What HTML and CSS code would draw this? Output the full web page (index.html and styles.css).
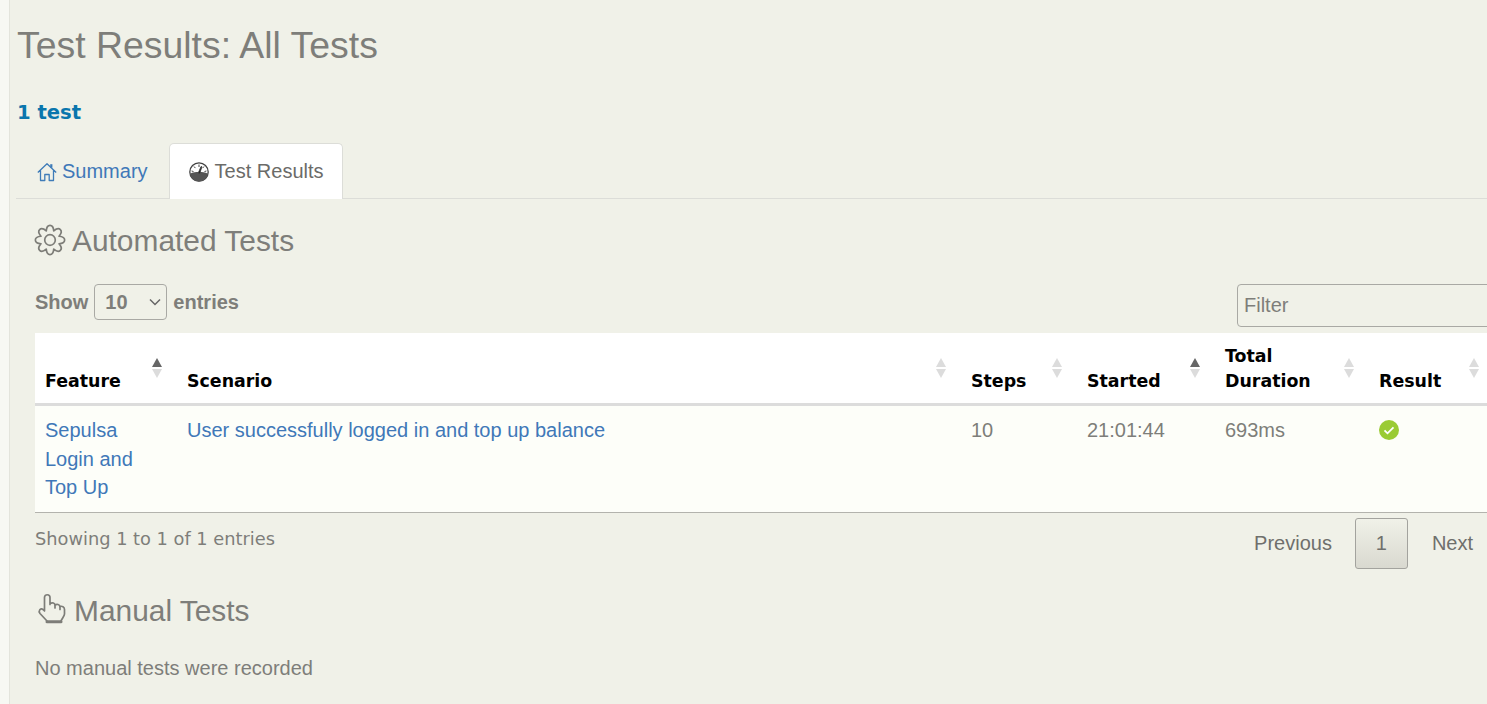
FILE: index.html
```html
<!DOCTYPE html>
<html lang="en">
<head>
<meta charset="utf-8">
<title>Test Results: All Tests</title>
<link rel="stylesheet" href="styles.css">
</head>
<body>
<main class="content">
  <h1 class="title">Test Results: All Tests</h1>
  <p class="count">1 test</p>
  <nav class="tabs">
    <a class="tab" href="#">
      <svg class="tab-icon" viewBox="0 0 20 20" fill="none" stroke="#3f7cb8" stroke-width="1.300"><path d="M.8 10.500 10 1.800l9.200 8.700M3.500 8.500V18.500h4.300v-6h4.400v6h4.300V8.500" stroke-linejoin="round"/><path d="M14.300 2.200v3.500" stroke-width="2.200"/></svg>
      Summary
    </a>
    <a class="tab tab-active" href="#">
      <svg class="tab-icon" viewBox="0 0 20 20"><circle cx="10" cy="10" r="9.200" fill="#fff" stroke="#444" stroke-width="1.300"/><path d="M1 12c2-1.700 4-1.500 6.500-2h5c2.500.5 4.500.3 6.500 2-.9 4.300-4.500 7.500-9 7.500S1.900 16.300 1 12z" fill="#555"/><path d="m9.300 11 2.800-6.500.8.300L10.700 11.300zM10 2.500v2.500M5 4.500l1.400 1.600M15 4.500l-1.400 1.600M2.600 9l1.900.5M17.400 9l-1.900.5" stroke="#444" stroke-width="1"/></svg>
      Test Results
    </a>
  </nav>
  <section class="panel">
    <h2 class="section-title">
      <svg class="section-icon" viewBox="0 0 30 30" fill="none" stroke="#7d7d78" stroke-width="1.700" stroke-linejoin="round"><path d="M11.250 5.950C11.800-1.500 18.200-1.500 18.750 5.950 24.410 1.070 28.930 5.590 24.050 11.250 31.500 11.800 31.500 18.200 24.050 18.750 28.930 24.410 24.410 28.930 18.750 24.050 18.200 31.500 11.800 31.500 11.250 24.050 5.590 28.930 1.070 24.410 5.950 18.750-1.500 18.200-1.500 11.800 5.950 11.250 1.070 5.590 5.590 1.070 11.250 5.950Z"/><circle cx="15" cy="15" r="5.300"/></svg>
      Automated Tests
    </h2>
    <div class="table-controls">
      <label class="length">Show
        <select class="length-select"><option>10</option></select>
        entries
      </label>
      <input class="filter" type="text" placeholder="Filter">
    </div>
    <table class="results">
      <colgroup>
        <col class="col-feature"><col class="col-scenario"><col class="col-steps"><col class="col-started"><col class="col-duration"><col class="col-result">
      </colgroup>
      <thead>
        <tr>
          <th class="sort sort-asc">Feature</th>
          <th class="sort">Scenario</th>
          <th class="sort">Steps</th>
          <th class="sort sort-asc">Started</th>
          <th class="sort">Total Duration</th>
          <th class="sort">Result</th>
        </tr>
      </thead>
      <tbody>
        <tr>
          <td><a href="#">Sepulsa Login and Top Up</a></td>
          <td><a href="#">User successfully logged in and top up balance</a></td>
          <td>10</td>
          <td>21:01:44</td>
          <td>693ms</td>
          <td><svg class="result-icon" viewBox="0 0 20 20"><circle cx="10" cy="10" r="10" fill="#9acb34"/><path d="m5.500 10.300 3 3 6-6" fill="none" stroke="#fff" stroke-width="1.800"/></svg></td>
        </tr>
      </tbody>
    </table>
    <div class="table-footer">
      <span class="info">Showing 1 to 1 of 1 entries</span>
      <div class="pager">
        <a class="page page-first" href="#">Previous</a>
        <a class="page page-current" href="#">1</a>
        <a class="page" href="#">Next</a>
      </div>
    </div>
    <h2 class="section-title section-manual">
      <svg class="section-icon hand-icon" viewBox="0 0 30 30" fill="none" stroke="#7d7d78" stroke-width="1.700" stroke-linejoin="round" stroke-linecap="round"><path d="M12 27 5 19.500C3 17 5.500 13.500 8 15.500L9.500 17V3.500C9.500-.2 15-.2 15 3.500V10.500M15 9.500c2.500-1.200 4.800-.5 5 1.500 2-1.200 4.500-.5 5 1.500 2-.8 4.500.5 4.500 3V20c0 2-2.500 4.500-3.500 7"/><path d="M20 11v3M25 12.500v3"/><path d="M12 27.800h14" stroke-width="3"/></svg>
      Manual Tests
    </h2>
    <p class="empty">No manual tests were recorded</p>
  </section>
</main>
</body>
</html>
```
FILE: styles.css
```css
html, body {
  margin: 0;
  height: 100%;
  overflow: hidden;
}
body {
  background: #f7f8f3;
  padding-left: 9px;
  font-family: "Liberation Sans", Arial, sans-serif;
  font-size: 20px;
  color: #7e7e7a;
  box-sizing: border-box;
}
a {
  color: #4078b8;
  text-decoration: none;
}
.content {
  box-sizing: border-box;
  width: 1520px;
  height: 704px;
  background: #f0f1e8;
  border-left: 1px solid #e3e4dc;
  padding: 0 0 0 6px;
}
.title {
  margin: 0;
  padding: 24px 0 0 1px;
  font-size: 37.400px;
  line-height: 43px;
  font-weight: 400;
}
.count {
  margin: 0;
  padding: 34px 0 0 1px;
  font-family: "DejaVu Sans", Verdana, sans-serif;
  font-weight: 700;
  font-size: 19.600px;
  line-height: 24px;
  color: #0a76ad;
}
.tabs {
  display: flex;
  margin-top: 18px;
  height: 55px;
  border-bottom: 1px solid #dcddd8;
}
.tab {
  display: flex;
  align-items: center;
  gap: 5px;
  box-sizing: border-box;
  height: 56px;
  padding: 0 20px;
  font-size: 20px;
  border: 1px solid transparent;
  border-bottom: 0;
  border-radius: 5px 5px 0 0;
}
.tab-active {
  gap: 6px;
  padding: 0 18px 0 19px;
  background: #fff;
  border-color: #dcddd8;
  color: #6b6b68;
}
.tab-icon {
  width: 20px;
  height: 20px;
  flex: none;
}
.panel {
  padding: 0 0 0 19px;
}
.section-title {
  display: flex;
  align-items: center;
  gap: 7px;
  margin: 0;
  padding-top: 24px;
  font-size: 29.900px;
  line-height: 36px;
  font-weight: 400;
}
.section-icon {
  width: 30px;
  height: 30px;
  flex: none;
  margin-top: -2px;
  overflow: visible;
}
.hand-icon {
  margin-top: -3px;
}
.table-controls {
  display: flex;
  justify-content: space-between;
  align-items: flex-start;
  width: 1462px;
  margin-top: 25px;
}
.length {
  display: flex;
  align-items: center;
  gap: 6px;
  height: 36px;
  font-weight: 700;
}
.length-select {
  appearance: none;
  width: 73px;
  height: 36px;
  padding-left: 10px;
  font: 700 20px "Liberation Sans", Arial, sans-serif;
  color: #7e7e7a;
  background: #f0f1e8 url("data:image/svg+xml,%3Csvg xmlns='http://www.w3.org/2000/svg' width='12' height='8'%3E%3Cpath d='M1 1.500 6 6.500l5-5' fill='none' stroke='%23666' stroke-width='1.500'/%3E%3C/svg%3E") no-repeat right 5px center;
  border: 1px solid #a9a9a4;
  border-radius: 4px;
}
.filter {
  box-sizing: border-box;
  width: 260px;
  height: 43px;
  padding: 0 6px;
  flex: none;
  font: 20px "Liberation Sans", Arial, sans-serif;
  background: #f0f1e8;
  border: 1px solid #a9a9a4;
  border-radius: 4px;
}
.filter::placeholder {
  color: #7e7e7a;
  opacity: 1;
}
.results {
  table-layout: fixed;
  width: 1459px;
  margin-top: 6px;
  border-collapse: collapse;
  background: #fdfef9;
  border-bottom: 1px solid #b3b3ad;
}
.col-feature { width: 142px; }
.col-scenario { width: 784px; }
.col-steps { width: 116px; }
.col-started { width: 138px; }
.col-duration { width: 154px; }
.col-result { width: 125px; }
.results th {
  position: relative;
  vertical-align: bottom;
  text-align: left;
  background: #fff;
  padding: 11px 10px 9px;
  font-family: "DejaVu Sans", Verdana, sans-serif;
  font-weight: 700;
  font-size: 17.400px;
  line-height: 25px;
  color: #000;
  border-bottom: 3px solid #dcdcdc;
}
.results td {
  vertical-align: top;
  padding: 10px 10px 10px;
  font-size: 20px;
  line-height: 28.500px;
}
.sort::before,
.sort::after {
  content: "";
  position: absolute;
  right: 15px;
  width: 0;
  height: 0;
  border-left: 5px solid transparent;
  border-right: 5px solid transparent;
}
.sort::before {
  top: 25px;
  border-bottom: 9px solid #dcdcdc;
}
.sort::after {
  top: 36px;
  border-top: 9px solid #dcdcdc;
}
.sort-asc::before {
  border-bottom-color: #666;
}
.result-icon {
  display: block;
  width: 20px;
  height: 20px;
  margin-top: 4px;
}
.table-footer {
  display: flex;
  justify-content: space-between;
  align-items: flex-start;
  width: 1462px;
  margin-top: 5px;
}
.info {
  padding-top: 9px;
  font-family: "DejaVu Sans", Verdana, sans-serif;
  font-size: 17.800px;
  line-height: 24px;
}
.pager {
  display: flex;
}
.page {
  box-sizing: border-box;
  height: 51px;
  padding: 0 23px;
  display: flex;
  align-items: center;
  color: #6f6f6c;
  border: 1px solid transparent;
  border-radius: 3px;
}
.page-first {
  padding-right: 22px;
}
.page-current {
  width: 53px;
  justify-content: center;
  padding: 0;
  border-color: #a3a39e;
  background: linear-gradient(#f0f1e8, #d9d9d0);
}
.section-manual {
  gap: 9px;
  padding-top: 0;
  margin-top: 24px;
}
.empty {
  margin: 0;
  padding-top: 27px;
  line-height: 24px;
}
```
